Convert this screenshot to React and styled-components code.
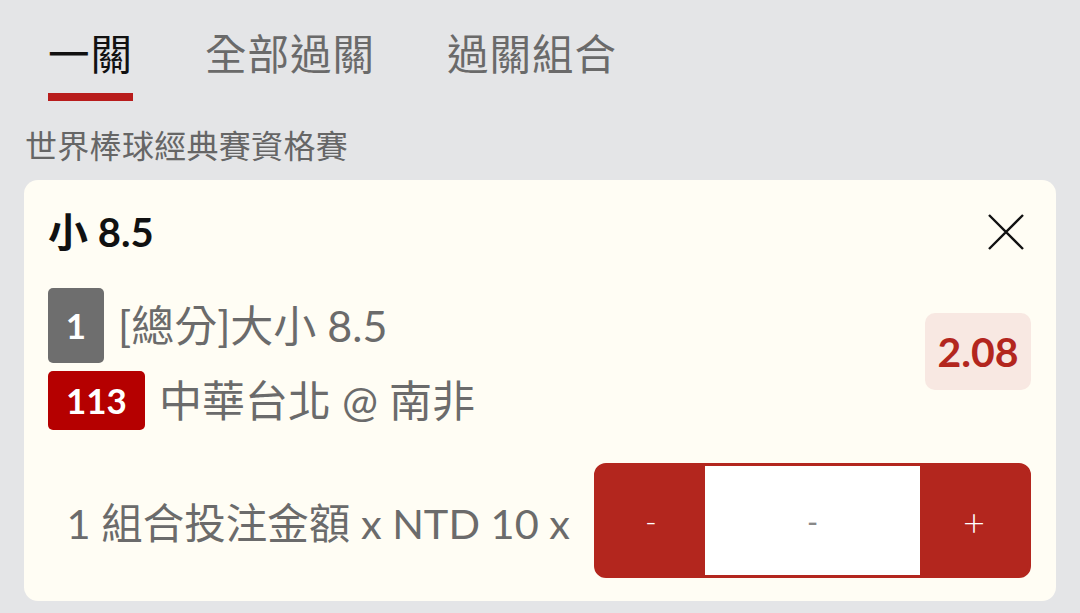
import React from 'react';
import styled, { createGlobalStyle } from 'styled-components';

const GlobalStyle = createGlobalStyle`
	html, body {
		margin: 0;
		padding: 0;
		background: #e4e5e7;
	}
	body {
		font-family: "Lato", "Noto Sans CJK TC", sans-serif;
		width: 1080px;
		height: 613px;
		overflow: hidden;
	}
`;

const Page = styled.div`
	display: flex;
	flex-direction: column;
	padding: 30px 24px 0 24px;
`;

const Tabs = styled.div`
	display: flex;
	gap: 72px;
	padding-left: 24px;
`;

const Tab = styled.div`
	font-size: 41.5px;
	line-height: 48px;
	color: ${p => (p.active ? '#111' : '#6a6a6a')};
	padding-bottom: 15px;
	border-bottom: 8px solid ${p => (p.active ? '#b81c1c' : 'transparent')};
	letter-spacing: 1px;
`;

const League = styled.div`
	margin-top: 25px;
	font-size: 32px;
	line-height: 40px;
	letter-spacing: 0.3px;
	color: #666;
	padding-left: 1px;
`;

const Card = styled.div`
	margin-top: 14px;
	background: #fffdf4;
	border-radius: 14px;
	padding: 30px 25px 23px 24px;
	display: flex;
	flex-direction: column;
`;

const Header = styled.div`
	display: flex;
	align-items: center;
	justify-content: space-between;
	height: 44px;
`;

const Title = styled.div`
	font-size: 40px;
	font-weight: 700;
	color: #111;
	line-height: 44px;
`;

const Close = styled.button`
	border: none;
	background: none;
	padding: 0;
	margin-right: 6px;
	width: 38px;
	height: 38px;
	display: flex;
	align-items: center;
	justify-content: center;
`;

const Body = styled.div`
	margin-top: 34px;
	display: flex;
	align-items: center;
	justify-content: space-between;
`;

const Lines = styled.div`
	display: flex;
	flex-direction: column;
	gap: 8px;
`;

const Line = styled.div`
	display: flex;
	align-items: center;
	gap: 14px;
	font-size: 43px;
	line-height: 52px;
	color: #6b6b6b;
`;

const Badge = styled.div`
	min-width: ${p => (p.tall ? '56px' : 'auto')};
	height: ${p => (p.tall ? '75px' : '59px')};
	padding: 0 ${p => (p.tall ? '0' : '18px')};
	box-sizing: border-box;
	border-radius: 5px;
	background: ${p => p.color};
	color: #fff;
	font-weight: 700;
	font-size: 35px;
	line-height: 1;
	display: flex;
	align-items: center;
	justify-content: center;
`;

const Odds = styled.div`
	margin-bottom: 16px;
	width: 106px;
	height: 77px;
	border-radius: 10px;
	background: #f8e8e2;
	color: #b3261e;
	font-weight: 700;
	font-size: 41px;
	display: flex;
	align-items: center;
	justify-content: center;
`;

const StakeRow = styled.div`
	margin-top: 33px;
	display: flex;
	align-items: center;
	justify-content: flex-end;
	gap: 24px;
`;

const StakeLabel = styled.div`
	font-size: 41.5px;
	color: #6b6b6b;
`;

const Stepper = styled.div`
	display: flex;
	width: 437px;
	height: 115px;
	box-sizing: border-box;
	border: 3px solid #b3261e;
	border-radius: 12px;
	background: #b3261e;
	overflow: hidden;
`;

const StepButton = styled.div`
	width: 108px;
	display: flex;
	align-items: center;
	justify-content: center;
	color: #fff;
	font-size: ${p => (p.plus ? '38px' : '32px')};
	font-weight: 300;
`;

const Amount = styled.div`
	flex: 1;
	background: #fff;
	display: flex;
	align-items: center;
	justify-content: center;
	color: #888;
	font-size: 30px;
`;

export default function App() {
	return (
		<>
			<GlobalStyle />
			<Page>
				<Tabs>
					<Tab active>一關</Tab>
					<Tab>全部過關</Tab>
					<Tab>過關組合</Tab>
				</Tabs>
				<League>世界棒球經典賽資格賽</League>
				<Card>
					<Header>
						<Title>小 8.5</Title>
						<Close>
							<svg width="36" height="36" viewBox="0 0 36 36">
								<path d="M1 1 L35 35 M35 1 L1 35" stroke="#111" strokeWidth="2.4" fill="none" />
							</svg>
						</Close>
					</Header>
					<Body>
						<Lines>
							<Line>
								<Badge tall color="#6e6e6e">1</Badge>
								<span>[總分]大小 8.5</span>
							</Line>
							<Line>
								<Badge color="#b50000">113</Badge>
								<span>中華台北 @ 南非</span>
							</Line>
						</Lines>
						<Odds>2.08</Odds>
					</Body>
					<StakeRow>
						<StakeLabel>1 組合投注金額 x NTD 10 x</StakeLabel>
						<Stepper>
							<StepButton>-</StepButton>
							<Amount>-</Amount>
							<StepButton plus>+</StepButton>
						</Stepper>
					</StakeRow>
				</Card>
			</Page>
		</>
	);
}
